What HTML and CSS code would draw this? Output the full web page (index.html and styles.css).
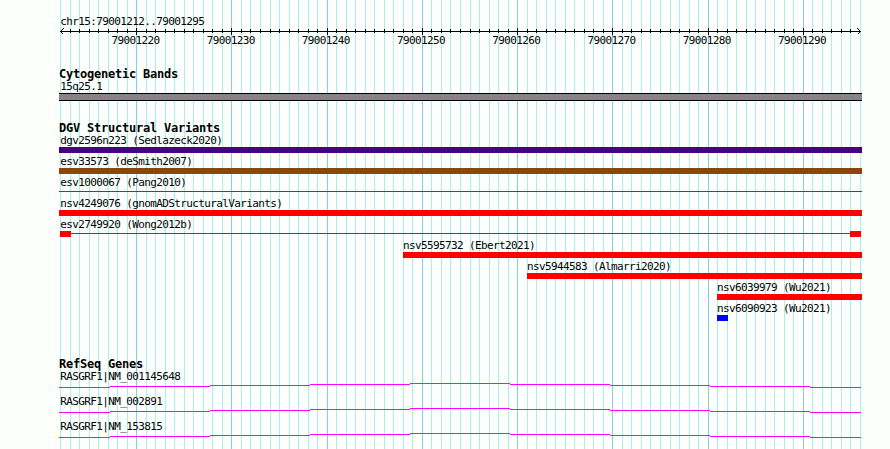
FILE: index.html
```html
<!DOCTYPE html>
<html lang="en">
<head>
<meta charset="utf-8">
<title>chr15:79001212..79001295</title>
<link rel="stylesheet" href="styles.css">
</head>
<body>
<svg class="grid" id="grid" width="890" height="449" aria-hidden="true"></svg>
<main class="tracks">
  <section class="ruler">
    <div class="label">chr15:79001212..79001295</div>
    <svg class="axis" id="axis" width="803" height="8"></svg>
    <div class="numbers">
      <span>79001220</span><span>79001230</span><span>79001240</span><span>79001250</span><span>79001260</span><span>79001270</span><span>79001280</span><span>79001290</span>
    </div>
  </section>
  <section class="bands">
    <h2>Cytogenetic Bands</h2>
    <div class="label">15q25.1</div>
    <div class="band"></div>
  </section>
  <section class="variants">
    <h2>DGV Structural Variants</h2>
    <div class="row"><div class="label">dgv2596n223 (Sedlazeck2020)</div><div class="bar indigo"></div></div>
    <div class="row"><div class="label">esv33573 (deSmith2007)</div><div class="bar brown"></div></div>
    <div class="row"><div class="label">esv1000067 (Pang2010)</div><div class="bar thin"></div></div>
    <div class="row"><div class="label">nsv4249076 (gnomADStructuralVariants)</div><div class="bar red"></div></div>
    <div class="row"><div class="label">esv2749920 (Wong2012b)</div><div class="bar ends"><i></i><b></b><i></i></div></div>
    <div class="row from-ebert"><div class="label">nsv5595732 (Ebert2021)</div><div class="bar red"></div></div>
    <div class="row from-almarri"><div class="label">nsv5944583 (Almarri2020)</div><div class="bar red"></div></div>
    <div class="row from-wu"><div class="label">nsv6039979 (Wu2021)</div><div class="bar red"></div></div>
    <div class="row from-wu"><div class="label">nsv6090923 (Wu2021)</div><div class="bar blue"></div></div>
  </section>
  <section class="genes">
    <h2>RefSeq Genes</h2>
    <div class="gene"><div class="label">RASGRF1|NM_001145648</div><svg class="intron" width="803" height="5"></svg></div>
    <div class="gene"><div class="label">RASGRF1|NM_002891</div><svg class="intron" width="803" height="5"></svg></div>
    <div class="gene"><div class="label">RASGRF1|NM_153815</div><svg class="intron" width="803" height="5"></svg></div>
  </section>
</main>
<script src="script.js"></script>
</body>
</html>
```

FILE: styles.css
```css
* { box-sizing: border-box; }
body {
  margin: 0;
  width: 890px;
  height: 449px;
  overflow: hidden;
  position: relative;
  background: #fdfffc;
  color: #000;
  font: 11px/13px "DejaVu Sans Mono", monospace;
  letter-spacing: -0.622px;
}
svg { display: block; shape-rendering: crispEdges; }
.grid { position: absolute; left: 0; top: 0; }
.minor { fill: #aaf0ee; }
.major { fill: #87ceeb; }
.tracks { position: relative; width: 803px; margin-left: 59px; padding-top: 15px; }
.label { height: 13px; padding-left: 1.3px; white-space: pre; }
h2 {
  margin: 0;
  height: 12px;
  font-size: 12px;
  line-height: 12px;
  letter-spacing: -0.224px;
  font-weight: bold;
  white-space: pre;
}
.axis { fill: #000; }
.axis path { fill: none; stroke: #000; }
.numbers { display: flex; gap: 47.24px; padding-left: 52.4px; height: 12px; line-height: 9px; }
.numbers span { width: 48px; }
.bands { margin-top: 20px; }
.band { height: 8px; border: solid #000; border-width: 1px 0; background: #878387; }
.variants { margin-top: 21px; }
.row { height: 21px; }
.bar { height: 6px; }
.indigo { background: #4b0082; }
.brown { background: #8b4513; }
.red { background: #f00; }
.blue { background: #00f; width: 11px; }
.thin { height: 1px; margin-top: 2px; background: #dc0a14; }
.ends { display: flex; padding: 0 1px; }
.ends i { width: 11px; background: #f00; }
.ends b { flex: 1; height: 1px; margin-top: 2px; background: #dc0a14; }
.from-ebert { margin-left: 344px; }
.from-almarri { margin-left: 468px; }
.from-wu { margin-left: 658px; }
.from-ebert .label, .from-almarri .label, .from-wu .label { padding-left: 0; }
.genes { margin-top: 35px; }
.gene { height: 25px; }
.intron { fill: none; stroke: #f0f; }
```

FILE: script.js
```js
const NS = "http://www.w3.org/2000/svg";
const add = (parent, name, attrs) => {
  const el = document.createElementNS(NS, name);
  for (const k in attrs) el.setAttribute(k, attrs[k]);
  parent.appendChild(el);
};
const grid = document.getElementById("grid");
const axis = document.getElementById("axis");
add(axis, "rect", { x: 1, y: 3, width: 801, height: 1 });
for (let i = 0; i <= 84; i++) {
  const x = Math.round(60 + (i * 800) / 84);
  const major = i % 10 === 8;
  add(grid, "rect", { x, y: 0, width: 1, height: 449, class: major ? "major" : "minor" });
  if (i > 0 && i < 84) {
    add(axis, "rect", { x: x - 59, y: major ? 0 : 1, width: 1, height: major ? 7 : 4 });
  }
}
add(axis, "path", { d: "M4.5 .5L1.5 3.5L4.5 6.5M798.5 .5L801.5 3.5L798.5 6.5" });
document.querySelectorAll(".intron").forEach((svg) => {
  add(svg, "path", { d: "M0 4.5H51M51 3.5H151M151 2.5H251M251 1.5H351M351 .5H451M451 1.5H551M551 2.5H651M651 3.5H751M751 4.5H802" });
});
```
